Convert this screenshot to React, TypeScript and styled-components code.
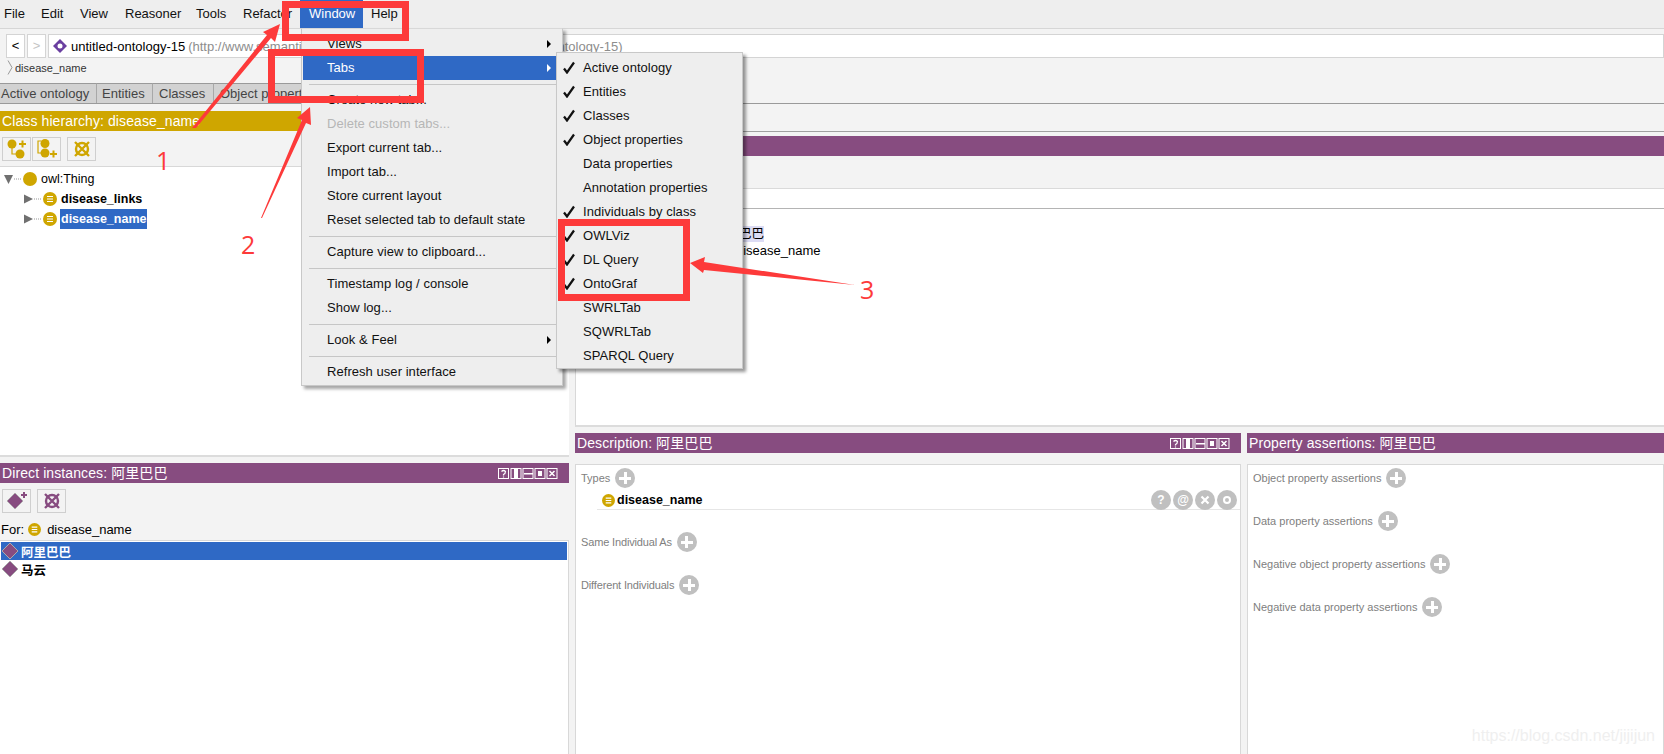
import React from "react";
import styled, { createGlobalStyle } from "styled-components";

const Global = createGlobalStyle`
  html, body { margin: 0; padding: 0; background: #f3f3f3; }
  * { box-sizing: border-box; }
`;

const PURPLE = "#874c80";
const GOLD = "#cfa600";
const BLUE = "#2f69c5";
const RED = "#fd3a3a";

const Page = styled.div`
  position: relative;
  width: 1664px;
  height: 754px;
  overflow: hidden;
  display: flex;
  flex-direction: column;
  background: #f3f3f3;
  color: #000;
  font-family: "Liberation Sans", "Noto Sans CJK SC", sans-serif;
  font-size: 12px;
`;

const MenuBar = styled.div`
  height: 29px;
  flex: none;
  display: flex;
  background: #eeeeee;
  border-bottom: 1px solid #d6d6d6;
`;
const MenuTitle = styled.div<{ $w: number; $pad: number; $active?: boolean }>`
  width: ${(p) => p.$w}px;
  height: 28px;
  line-height: 28px;
  font-size: 13px;
  padding-left: ${(p) => p.$pad}px;
  color: ${(p) => (p.$active ? "#fff" : "#111")};
  background: ${(p) => (p.$active ? BLUE : "transparent")};
`;

const AddressRow = styled.div`
  height: 29px;
  flex: none;
  display: flex;
  align-items: flex-start;
  padding: 5px 0 0 6px;
`;
const NavButton = styled.div<{ $off?: boolean }>`
  width: 19px;
  height: 24px;
  margin-right: 2px;
  background: #fff;
  border: 1px solid #d4d4d4;
  text-align: center;
  line-height: 22px;
  font-size: 13px;
  color: ${(p) => (p.$off ? "#c4c4c4" : "#000")};
`;
const AddressField = styled.div`
  flex: 1;
  height: 24px;
  background: #fff;
  border: 1px solid #d4d4d4;
  display: flex;
  align-items: center;
  padding-left: 3px;
  font-size: 13px;
  gap: 3px;
  white-space: nowrap;
`;
const AddressUrl = styled.span`
  color: #8d8d8d;
`;

const Crumbs = styled.div`
  height: 25px;
  flex: none;
  display: flex;
  align-items: center;
  padding: 0 0 6px 7px;
  gap: 2px;
  font-size: 11px;
  color: #333;
`;

const TabStrip = styled.div`
  height: 21px;
  flex: none;
  display: flex;
  border-bottom: 1px solid #9a9a9a;
`;
const TabItem = styled.div<{ $w: number; $pad: number }>`
  width: ${(p) => p.$w}px;
  flex: none;
  background: #d2d2d2;
  border-top: 1px solid #9a9a9a;
  border-right: 1px solid #a8a8a8;
  color: #444;
  line-height: 20px;
  font-size: 13px;
  padding-left: ${(p) => p.$pad}px;
  white-space: nowrap;
  overflow: hidden;
`;

const Main = styled.div`
  flex: 1;
  min-height: 0;
  display: grid;
  grid-template-columns: 569px 1fr;
  column-gap: 6px;
`;

const LeftColumn = styled.div`
  display: flex;
  flex-direction: column;
  padding-top: 7px;
  min-height: 0;
`;
const RightColumn = styled.div`
  display: flex;
  flex-direction: column;
  min-height: 0;
`;

const PanelHeader = styled.div<{ $color: string }>`
  height: 20px;
  flex: none;
  background: ${(p) => p.$color};
  color: #fff;
  font-size: 14px;
  line-height: 20px;
  padding-left: 2px;
  display: flex;
  align-items: center;
  justify-content: space-between;
  white-space: nowrap;
`;
const HeaderTitle = styled.span`
  letter-spacing: 0.1px;
`;
const ViewControls = styled.svg`
  flex: none;
  margin-right: 11px;
`;

const ToolRow = styled.div`
  display: flex;
  flex: none;
  padding: 6px 0 0 2px;
  height: 35px;
  gap: 1px;
`;
const ToolButton = styled.div<{ $gap?: number }>`
  width: 29px;
  height: 24px;
  margin-left: ${(p) => p.$gap ?? 0}px;
  border: 1px solid #cfcfcf;
  background: #f3f3f3;
  display: flex;
  align-items: center;
  justify-content: center;
`;

const TreeBox = styled.div`
  height: 291px;
  flex: none;
  background: #fff;
  border-top: 1px solid #d8d8d8;
  border-bottom: 2px solid #dcdcdc;
  padding-top: 2px;
`;
const TreeRow = styled.div<{ $indent: number }>`
  height: 20px;
  display: flex;
  align-items: center;
  padding-left: ${(p) => p.$indent}px;
  font-size: 12.5px;
`;
const TreeTwist = styled.svg`
  flex: none;
  margin-right: 1px;
`;
const TreeLabel = styled.span<{ $selected?: boolean; $bold?: boolean }>`
  margin-left: 3px;
  padding: 0 1px;
  line-height: 20px;
  font-weight: ${(p) => (p.$bold ? 700 : 400)};
  color: ${(p) => (p.$selected ? "#fff" : "#000")};
  background: ${(p) => (p.$selected ? BLUE : "transparent")};
`;

const InstancesPanel = styled.div`
  margin-top: 6px;
  flex: 1;
  min-height: 0;
  display: flex;
  flex-direction: column;
`;
const ForRow = styled.div`
  height: 22px;
  flex: none;
  display: flex;
  align-items: center;
  padding: 0 0 0 1px;
  gap: 4px;
  font-size: 13px;
`;
const ForName = styled.span`
  margin-left: 2px;
`;
const InstanceList = styled.div`
  flex: 1;
  background: #fff;
  border-top: 1px solid #d8d8d8;
  border-right: 1px solid #d8d8d8;
  padding: 1px 1px 0 1px;
`;
const InstanceRow = styled.div<{ $selected?: boolean }>`
  height: 18px;
  display: flex;
  align-items: center;
  gap: 2px;
  font-size: 12.5px;
  font-weight: 700;
  color: ${(p) => (p.$selected ? "#fff" : "#000")};
  background: ${(p) => (p.$selected ? BLUE : "transparent")};
`;

const RightBand = styled.div`
  height: 28px;
  flex: none;
  border-bottom: 1px solid #a0a0a0;
`;
const RightHeaderGap = styled.div`
  padding-top: 4px;
  flex: none;
`;
const RightBlank = styled.div`
  height: 33px;
  flex: none;
  border-bottom: 1px solid #dadada;
`;
const RightStrip = styled.div`
  height: 20px;
  flex: none;
  background: #fff;
  border-bottom: 1px solid #b4b4b4;
`;
const IndividualBox = styled.div`
  height: 218px;
  flex: none;
  background: #fff;
  border-left: 1px solid #d8d8d8;
  border-bottom: 2px solid #dcdcdc;
  padding-top: 17px;
`;
const IndividualName = styled.div`
  margin-left: 138px;
  width: max-content;
  background: #dcdcf4;
  font-size: 12.5px;
  line-height: 16px;
`;
const IndividualType = styled.div`
  margin-left: 160px;
  font-size: 13px;
  line-height: 17px;
`;

const LowerRow = styled.div`
  flex: 1;
  min-height: 0;
  margin-top: 6px;
  display: grid;
  grid-template-columns: 666px 1fr;
  column-gap: 6px;
`;
const LowerPanel = styled.div`
  display: flex;
  flex-direction: column;
  min-height: 0;
`;
const FrameBox = styled.div`
  flex: 1;
  margin-top: 11px;
  background: #fff;
  border: 1px solid #d8d8d8;
  border-bottom: 0;
  padding: 3px 0 0 5px;
`;
const SectionHead = styled.div<{ $space?: number; $tight?: boolean }>`
  display: flex;
  align-items: center;
  gap: 5px;
  height: 20px;
  margin-bottom: ${(p) => p.$space ?? 23}px;
  font-size: 11px;
  letter-spacing: ${(p) => (p.$tight ? "-0.15px" : "0")};
  color: #808080;
`;
const AddDot = styled.div`
  width: 20px;
  height: 20px;
  flex: none;
  border-radius: 50%;
  background: #c0c0c0;
  position: relative;
  &::before {
    content: "";
    position: absolute;
    left: 4px;
    top: 8.5px;
    width: 12px;
    height: 3px;
    background: #fff;
  }
  &::after {
    content: "";
    position: absolute;
    left: 8.5px;
    top: 4px;
    width: 3px;
    height: 12px;
    background: #fff;
  }
`;
const TypeRow = styled.div`
  display: flex;
  align-items: center;
  margin: 0 0 22px 16px;
  height: 22px;
  padding: 3px 0 0 5px;
  border-bottom: 1px solid #e6e6e6;
  font-size: 12.5px;
  font-weight: 700;
  gap: 2px;
`;
const RowActions = styled.div`
  margin-left: auto;
  display: flex;
  gap: 2px;
  margin-right: 3px;
  height: 20px;
`;
const ActionDot = styled.div`
  width: 20px;
  height: 20px;
  border-radius: 50%;
  background: #c0c0c0;
  color: #fff;
  font-size: 12px;
  font-weight: 700;
  display: flex;
  align-items: center;
  justify-content: center;
`;

const Menu = styled.div`
  position: absolute;
  left: 301px;
  top: 28px;
  width: 262px;
  height: 358px;
  background: #eeeeee;
  border: 1px solid #c8c8c8;
  border-top-color: #d8d8d8;
  box-shadow: 3px 3px 3px rgba(0, 0, 0, 0.35);
  padding: 3px 6px 0 1px;
`;
const SubMenu = styled.div`
  position: absolute;
  left: 556px;
  top: 52px;
  width: 187px;
  height: 317px;
  background: #eeeeee;
  border: 1px solid #c8c8c8;
  box-shadow: 3px 3px 3px rgba(0, 0, 0, 0.4);
  padding-top: 2px;
`;
const Item = styled.div<{ $active?: boolean; $disabled?: boolean }>`
  height: 24px;
  line-height: 24px;
  padding-left: 24px;
  font-size: 13px;
  letter-spacing: 0.05px;
  display: flex;
  align-items: center;
  justify-content: space-between;
  white-space: nowrap;
  color: ${(p) => (p.$active ? "#fff" : p.$disabled ? "#b6b6b6" : "#111")};
  background: ${(p) => (p.$active ? BLUE : "transparent")};
`;
const ItemArrow = styled.i<{ $white?: boolean }>`
  display: block;
  width: 0;
  height: 0;
  margin-right: 5px;
  border-left: 4px solid ${(p) => (p.$white ? "#fff" : "#000")};
  border-top: 4px solid transparent;
  border-bottom: 4px solid transparent;
`;
const MenuSep = styled.div`
  height: 8px;
  margin-left: 6px;
  margin-right: -6px;
  display: flex;
  align-items: center;
  &::after {
    content: "";
    flex: 1;
    height: 1px;
    background: #c6c6c6;
  }
`;
const SubItem = styled.div`
  height: 24px;
  display: flex;
  align-items: center;
  padding-left: 6px;
  font-size: 13px;
  letter-spacing: 0.05px;
  color: #111;
  white-space: nowrap;
`;
const CheckSlot = styled.svg`
  width: 12px;
  height: 13px;
  flex: none;
  margin-right: 8px;
`;

const AnnotationLayer = styled.svg`
  position: absolute;
  left: 0;
  top: 0;
  pointer-events: none;
`;
const Callout = styled.div<{ $x: number; $y: number }>`
  position: absolute;
  left: ${(p) => p.$x}px;
  top: ${(p) => p.$y}px;
  color: ${RED};
  font-family: "Open Sans", sans-serif;
  font-size: 25px;
  line-height: 26px;
  font-weight: 400;
`;
const Watermark = styled.div`
  position: absolute;
  right: 9px;
  top: 726px;
  font-size: 16px;
  line-height: 20px;
  color: #efefef;
`;
const IconSvg = styled.svg`
  flex: none;
`;

const ClassIcon = ({ r = 7, plain = false }: { r?: number; plain?: boolean }) => (
  <IconSvg width={r * 2} height={r * 2} viewBox="0 0 14 14">
    <circle cx="7" cy="7" r="7" fill={GOLD} />
    {!plain && <path d="M4 4.500h6M4 7h6M4 9.500h6" stroke="#fff" strokeWidth="1.200" />}
  </IconSvg>
);
const Diamond = () => (
  <IconSvg width="18" height="18" viewBox="0 0 18 18">
    <path d="M9 1l8 8-8 8-8-8z" fill={PURPLE} stroke="#aaa" strokeWidth="1" />
  </IconSvg>
);
const NoEntry = ({ color }: { color: string }) => (
  <svg width="20" height="20" viewBox="0 0 20 20">
    <circle cx="10" cy="10" r="6" fill="none" stroke={color} strokeWidth="2.400" />
    <path d="M3 3l14 14M17 3L3 17" stroke={color} strokeWidth="2.400" />
  </svg>
);
const Check = () => (
  <CheckSlot viewBox="0 0 12 13">
    <path d="M1 7.500l3 4L11 1.500" fill="none" stroke="#111" strokeWidth="2.200" />
  </CheckSlot>
);
const NoCheck = () => <CheckSlot viewBox="0 0 12 13" />;

const Controls = () => (
  <ViewControls width="60" height="11" viewBox="0 0 60 11">
    <g fill="none" stroke="#fff" strokeWidth="1">
      <rect x="0.500" y="0.500" width="10" height="10" />
      <rect x="13" y="0.500" width="10" height="10" />
      <rect x="25" y="0.500" width="10" height="10" />
      <rect x="37" y="0.500" width="10" height="10" />
      <rect x="49" y="0.500" width="10" height="10" />
    </g>
    <path d="M3.500 3.500q2-2 4 0q0 2-2 3v1M5.500 8.500v1" fill="none" stroke="#fff" strokeWidth="1.200" />
    <path d="M16 1h4v9h-4zM26 5h9v1.500h-9zM40 3h4v5h-4z" fill="#fff" />
    <path d="M51.500 3l5 5M56.500 3l-5 5" stroke="#fff" strokeWidth="1.500" />
  </ViewControls>
);

const TITLES: [string, number, number, boolean?][] = [
  ["File", 37, 4], ["Edit", 39, 4], ["View", 45, 4], ["Reasoner", 71, 4], ["Tools", 47, 4], ["Refactor", 61, 4], ["Window", 63, 9, true], ["Help", 42, 8],
];
const TABS: [string, number, number][] = [["Active ontology", 97, 1], ["Entities", 56, 5], ["Classes", 61, 6], ["Object properties", 342, 6]];
const SUB: [string, boolean][] = [
  ["Active ontology", true], ["Entities", true], ["Classes", true], ["Object properties", true],
  ["Data properties", false], ["Annotation properties", false], ["Individuals by class", true],
  ["OWLViz", true], ["DL Query", true], ["OntoGraf", true], ["SWRLTab", false], ["SQWRLTab", false], ["SPARQL Query", false],
];

export default function App() {
  return (
    <Page>
      <Global />
      <MenuBar>
        {TITLES.map(([t, w, pad, a]) => (
          <MenuTitle key={t} $w={w} $pad={pad} $active={a}>{t}</MenuTitle>
        ))}
      </MenuBar>
      <AddressRow>
        <NavButton>&lt;</NavButton>
        <NavButton $off>&gt;</NavButton>
        <AddressField>
          <IconSvg width="16" height="16" viewBox="0 0 16 16">
            <path d="M8 1l7 7-7 7-7-7z" fill="#6a3fa0" />
            <circle cx="8" cy="8" r="2.500" fill="#fff" />
          </IconSvg>
          <span>untitled-ontology-15</span>
          <AddressUrl>(http://www.semanticweb.org/jijijun/ontologies/2019/08/untitled-ontology-15)</AddressUrl>
        </AddressField>
      </AddressRow>
      <Crumbs>
        <svg width="6" height="15" viewBox="0 0 6 15">
          <path d="M1 0.500l4 7-4 7" fill="none" stroke="#999" />
        </svg>
        disease_name
      </Crumbs>
      <TabStrip>
        {TABS.map(([t, w, pad]) => (
          <TabItem key={t} $w={w} $pad={pad}>{t}</TabItem>
        ))}
      </TabStrip>
      <Main>
        <LeftColumn>
          <PanelHeader $color={GOLD}>
            <HeaderTitle>Class hierarchy: disease_name</HeaderTitle>
          </PanelHeader>
          <ToolRow>
            <ToolButton>
              <svg width="22" height="22" viewBox="0 0 22 22">
                <circle cx="6" cy="6" r="4.500" fill={GOLD} />
                <circle cx="14" cy="16" r="4.500" fill={GOLD} />
                <path d="M6 8v8h6" fill="none" stroke={GOLD} strokeWidth="1.200" />
                <path d="M13 6h7M16.500 2.500v7" stroke={GOLD} strokeWidth="2" />
              </svg>
            </ToolButton>
            <ToolButton>
              <svg width="22" height="22" viewBox="0 0 22 22">
                <circle cx="9" cy="5.500" r="4.500" fill={GOLD} />
                <circle cx="9" cy="15" r="4.500" fill={GOLD} />
                <path d="M5 3H2v12h3" fill="none" stroke={GOLD} strokeWidth="1.200" />
                <path d="M14 16h7M17.500 12.500v7" stroke={GOLD} strokeWidth="2" />
              </svg>
            </ToolButton>
            <ToolButton $gap={5}>
              <NoEntry color={GOLD} />
            </ToolButton>
          </ToolRow>
          <TreeBox>
            <TreeRow $indent={3}>
              <TreeTwist width="19" height="12" viewBox="0 0 19 12">
                <path d="M1 2h9l-4.500 9z" fill="#707070" />
                <path d="M11 6h7" stroke="#999" strokeDasharray="1 1" />
              </TreeTwist>
              <ClassIcon r={7} plain />
              <TreeLabel>owl:Thing</TreeLabel>
            </TreeRow>
            <TreeRow $indent={23}>
              <TreeTwist width="19" height="12" viewBox="0 0 19 12">
                <path d="M1 1.500l9 4.500-9 4.500z" fill="#707070" />
                <path d="M11 6h7" stroke="#999" strokeDasharray="1 1" />
              </TreeTwist>
              <ClassIcon r={7} />
              <TreeLabel $bold>disease_links</TreeLabel>
            </TreeRow>
            <TreeRow $indent={23}>
              <TreeTwist width="19" height="12" viewBox="0 0 19 12">
                <path d="M1 1.500l9 4.500-9 4.500z" fill="#707070" />
                <path d="M11 6h7" stroke="#999" strokeDasharray="1 1" />
              </TreeTwist>
              <ClassIcon r={7} />
              <TreeLabel $bold $selected>disease_name</TreeLabel>
            </TreeRow>
          </TreeBox>
          <InstancesPanel>
            <PanelHeader $color={PURPLE}>
              <HeaderTitle>Direct instances: 阿里巴巴</HeaderTitle>
              <Controls />
            </PanelHeader>
            <ToolRow>
              <ToolButton>
                <svg width="22" height="22" viewBox="0 0 22 22">
                  <path d="M9 3l8 8-8 8-8-8z" fill={PURPLE} stroke="#aaa" strokeWidth="0.800" />
                  <path d="M15 5h6M18 2v6" stroke={PURPLE} strokeWidth="2" />
                </svg>
              </ToolButton>
              <ToolButton $gap={5}>
                <NoEntry color={PURPLE} />
              </ToolButton>
            </ToolRow>
            <ForRow>
              For: <ClassIcon r={6.5} /> <ForName>disease_name</ForName>
            </ForRow>
            <InstanceList>
              <InstanceRow $selected><Diamond />阿里巴巴</InstanceRow>
              <InstanceRow><Diamond />马云</InstanceRow>
            </InstanceList>
          </InstancesPanel>
        </LeftColumn>
        <RightColumn>
          <RightBand />
          <RightHeaderGap>
            <PanelHeader $color={PURPLE} />
          </RightHeaderGap>
          <RightBlank />
          <RightStrip />
          <IndividualBox>
            <IndividualName>阿里巴巴</IndividualName>
            <IndividualType>disease_name</IndividualType>
          </IndividualBox>
          <LowerRow>
            <LowerPanel>
              <PanelHeader $color={PURPLE}>
                <HeaderTitle>Description: 阿里巴巴</HeaderTitle>
                <Controls />
              </PanelHeader>
              <FrameBox>
                <SectionHead $space={0}>Types <AddDot /></SectionHead>
                <TypeRow>
                  <ClassIcon r={6.5} />
                  disease_name
                  <RowActions>
                    <ActionDot>?</ActionDot>
                    <ActionDot>@</ActionDot>
                    <ActionDot>
                      <svg width="10" height="10" viewBox="0 0 10 10">
                        <path d="M1.500 1.500l7 7M8.500 1.500l-7 7" stroke="#fff" strokeWidth="2.200" />
                      </svg>
                    </ActionDot>
                    <ActionDot>
                      <svg width="10" height="10" viewBox="0 0 10 10">
                        <circle cx="5" cy="5" r="3" fill="none" stroke="#fff" strokeWidth="2" />
                      </svg>
                    </ActionDot>
                  </RowActions>
                </TypeRow>
                <SectionHead $tight>Same Individual As <AddDot /></SectionHead>
                <SectionHead $tight>Different Individuals <AddDot /></SectionHead>
              </FrameBox>
            </LowerPanel>
            <LowerPanel>
              <PanelHeader $color={PURPLE}>
                <HeaderTitle>Property assertions: 阿里巴巴</HeaderTitle>
              </PanelHeader>
              <FrameBox>
                <SectionHead>Object property assertions <AddDot /></SectionHead>
                <SectionHead>Data property assertions <AddDot /></SectionHead>
                <SectionHead>Negative object property assertions <AddDot /></SectionHead>
                <SectionHead>Negative data property assertions <AddDot /></SectionHead>
              </FrameBox>
            </LowerPanel>
          </LowerRow>
        </RightColumn>
      </Main>

      <Menu>
        <Item>Views<ItemArrow /></Item>
        <Item $active>Tabs<ItemArrow $white /></Item>
        <MenuSep />
        <Item>Create new tab...</Item>
        <Item $disabled>Delete custom tabs...</Item>
        <Item>Export current tab...</Item>
        <Item>Import tab...</Item>
        <Item>Store current layout</Item>
        <Item>Reset selected tab to default state</Item>
        <MenuSep />
        <Item>Capture view to clipboard...</Item>
        <MenuSep />
        <Item>Timestamp log / console</Item>
        <Item>Show log...</Item>
        <MenuSep />
        <Item>Look &amp; Feel<ItemArrow /></Item>
        <MenuSep />
        <Item>Refresh user interface</Item>
      </Menu>
      <SubMenu>
        {SUB.map(([t, c]) => (
          <SubItem key={t}>{c ? <Check /> : <NoCheck />}{t}</SubItem>
        ))}
      </SubMenu>

      <AnnotationLayer width="1664" height="754" viewBox="0 0 1664 754">
        <g fill="none" stroke={RED} strokeWidth="7">
          <rect x="285.500" y="4.500" width="120" height="33" />
          <rect x="271.500" y="52.500" width="149" height="47" />
          <rect x="561.500" y="222.500" width="125" height="75" />
        </g>
        <g fill={RED}>
          <polygon points="192,128 267,35 263,32 280,24 275,42 271,38 196,128" />
          <polygon points="261,218 302,120 297,118 310,107 311,125 306,123 262,218" />
          <polygon points="690,263 705,257 704,262 855,285 704,270 703,273" />
        </g>
      </AnnotationLayer>
      <Callout $x={156} $y={147}>1</Callout>
      <Callout $x={241} $y={231}>2</Callout>
      <Callout $x={860} $y={276}>3</Callout>
      <Watermark>https://blog.csdn.net/jijijun</Watermark>
    </Page>
  );
}
